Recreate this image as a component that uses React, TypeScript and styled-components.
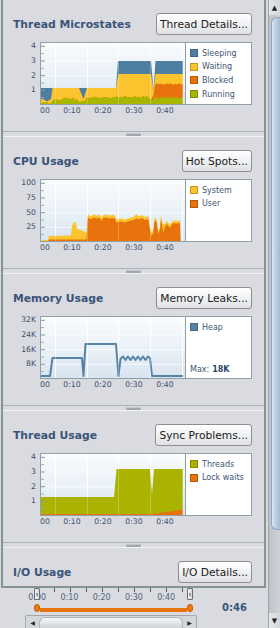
import React from "react";
import styled, { createGlobalStyle } from "styled-components";

const GlobalStyle = createGlobalStyle`
  html, body { margin: 0; padding: 0; }
  body {
    background: #d9dbe0;
    font-family: "DejaVu Sans", "Noto Sans", sans-serif;
    width: 280px;
    height: 628px;
    overflow: hidden;
  }
`;

const COL = {
  sleeping: "#4f7fa0",
  waiting: "#fbc32d",
  blocked: "#e8720c",
  running: "#a7b600",
  threads: "#a9b300",
  heap: "#5784a5",
  title: "#3b5478",
  text: "#3f5373",
};

type Pt = [number, number];
const PW = 144;
const PH = 61;

const areaPath = (pts: Pt[]) =>
  `M${pts[0][0]},${PH} ` +
  pts.map((p) => `L${p[0].toFixed(2)},${p[1].toFixed(2)}`).join(" ") +
  ` L${pts[pts.length - 1][0]},${PH} Z`;

const linePath = (pts: Pt[]) =>
  pts.map((p, i) => `${i ? "L" : "M"}${p[0].toFixed(2)},${p[1].toFixed(2)}`).join(" ");

const noise = (x: number, s: number) =>
  Math.sin(x * 1.7 + s) * 0.6 + Math.sin(x * 0.63 + s * 2) * 0.5;

/* ---------- data ---------- */

const msTotal: Pt[] = [
  [0, 45], [75, 45], [77, 18], [110, 18], [112.5, 47], [114.5, 18], [142, 18],
];
const msWaiting: Pt[] = [
  [0, 56], [2, 56], [6, 58.5], [10, 56], [11.5, 45], [38, 45], [42.5, 56], [46, 45],
  [75, 45], [77.5, 31], [110, 31], [112.5, 47], [114.5, 31], [142, 31],
];
const msRunning: Pt[] = [];
for (let x = 0; x <= 142; x += 2) {
  let b = 58;
  if (x < 12) b = 60;
  else if (x < 38) b = x > 20 && x < 34 ? 55.5 : 57;
  else if (x < 46) b = 58.5;
  else if (x < 75) b = 54.5;
  else if (x < 110) b = 54;
  else if (x < 114) b = 57;
  else b = 54.5;
  msRunning.push([x, b + noise(x, 1)]);
}
const msBlocked: Pt[] = [...msRunning.filter((p) => p[0] <= 110), [112.5, 52], [114, 41.5]];
for (let x = 116; x <= 142; x += 2) msBlocked.push([x, 41 + noise(x, 3) * 0.8]);

const cpuUser: Pt[] = [
  [0, 61], [7, 61], [8, 59.5], [45.5, 59.5], [46.7, 38], [50, 39], [53, 37.5], [56, 38.5],
  [59, 38], [60.5, 41], [62.3, 38], [65, 37.5], [68, 38.5], [71, 38], [74, 38.5], [75.5, 43],
  [77.3, 42], [80, 41.5], [84, 42.5], [88, 41], [92.3, 40], [95.7, 38.5], [98, 39.5],
  [101, 38], [104, 40], [107.3, 39], [109, 50], [110.5, 56], [112.3, 53], [113.5, 41],
  [115.7, 42], [117, 54], [119, 50], [120, 38], [121, 45], [122.3, 53], [124, 47],
  [125.7, 44], [127.5, 46], [129, 48], [131, 44], [133, 43], [136, 43.5], [139, 43], [139.5, 61],
];
const cpuSystem: Pt[] = [
  [0, 61], [1, 60], [7, 60], [8, 56], [30, 55.5], [31, 46], [33, 42], [35, 43], [36, 49],
  [40, 50], [44, 52], [45.5, 53],
  ...cpuUser
    .filter((p) => p[0] >= 46.7 && p[0] <= 139)
    .map((p): Pt => {
      let y = p[1] - 3;
      if (p[0] === 95.7) y = 34;
      if (p[0] === 122.3) y = 44;
      if (p[0] >= 131) y = p[1] - 2.5;
      return [p[0], y];
    }),
  [139.5, 61],
];

const memLine: Pt[] = [[0, 59], [9, 59], [11.5, 41], [41, 41], [42.5, 59], [44.5, 27], [75, 27], [77.5, 59], [79.5, 42]];
{
  let up = true;
  for (let x = 82; x <= 107; x += 2.5) {
    memLine.push([x, up ? 39.5 : 43]);
    up = !up;
  }
}
memLine.push([109, 41], [111, 59], [142, 59]);

const thThreads: Pt[] = [[0, 43], [73, 43], [75.5, 15], [109, 15], [111, 40], [113, 15], [142, 15]];
const thLocks: Pt[] = [[0, 60], [110, 60], [126, 58], [142, 55.5]];

/* ---------- layout ---------- */

const Page = styled.div`
  display: flex;
  width: 280px;
  height: 628px;
  overflow: hidden;
`;

const Main = styled.div`
  width: 268px;
  display: flex;
  flex-direction: column;
`;

const Panel = styled.div`
  flex: none;
  margin-left: 1px;
  width: 265px;
  height: 588px;
  box-sizing: border-box;
  border: 2px solid #84958f;
  border-top: none;
  overflow: hidden;
`;

const Section = styled.section`
  padding: 13px 12px 15px 10px;
`;

const Header = styled.div`
  display: flex;
  justify-content: space-between;
  align-items: center;
  height: 22px;
`;

const Title = styled.h2`
  margin: 0;
  font-size: 10.8px;
  font-weight: 700;
  color: ${COL.title};
`;

const ActionButton = styled.button`
  height: 22px;
  box-sizing: border-box;
  margin: 0;
  padding: 0 3px;
  border: 1px solid #8c8e92;
  border-radius: 3px;
  background: linear-gradient(#ffffff, #f2f3f4 45%, #dfe0e3);
  font-family: "DejaVu Sans", sans-serif;
  font-size: 10.7px;
  color: #1c1c1c;
  white-space: nowrap;
`;

const ChartRow = styled.div`
  display: flex;
  margin-top: 7px;
  height: 63px;
`;

const YAxis = styled.div`
  width: 27px;
  box-sizing: border-box;
  padding-right: 4px;
  text-align: right;
  font-size: 7.7px;
  line-height: 14.8px;
  color: #3d4f6e;
  & > div:first-child { margin-top: -3px; }
`;

const PlotBox = styled.div`
  width: 145px;
  height: 63px;
  box-sizing: border-box;
  border: 1px solid #8fa1a7;
  border-right: none;
  background: linear-gradient(#f9fbfd, #e9f0f7 55%, #d8e4f0);
  svg { display: block; }
`;

const LegendBox = styled.div`
  width: 67px;
  height: 63px;
  box-sizing: border-box;
  border: 1px solid #8fa1a7;
  background: #ffffff;
  padding: 3.5px 0 3px 4px;
  display: flex;
  flex-direction: column;
`;

const LegendItem = styled.div`
  display: flex;
  align-items: center;
  gap: 4px;
  height: 13.6px;
  font-size: 8px;
  color: ${COL.text};
  white-space: nowrap;
`;

const Swatch = styled.span<{ $c: string }>`
  width: 8px;
  height: 8px;
  flex: none;
  background: ${(p) => p.$c};
  box-shadow: inset 0 0 0 1px rgba(0, 0, 0, 0.22);
`;

const LegendFooter = styled.div`
  margin-top: auto;
  font-size: 8px;
  line-height: 10px;
  color: ${COL.text};
  b { color: #2f4466; margin-left: 3px; }
`;

const XAxis = styled.div`
  display: flex;
  margin-left: 27px;
  width: 145px;
  height: 11px;
  font-size: 7.7px;
  line-height: 11px;
  color: #3d4f6e;
`;

const XStart = styled.span`
  flex: none;
  width: 16.5px;
  text-align: left;
`;

const XTick = styled.span`
  flex: none;
  width: 31px;
  text-align: center;
`;

const Divider = styled.div`
  height: 6px;
  box-sizing: border-box;
  border-top: 1px solid #adb1b7;
  border-bottom: 1px solid #f3f4f6;
  display: flex;
  justify-content: center;
  align-items: center;
`;

const Grip = styled.span`
  width: 15px;
  height: 3px;
  border-radius: 1px;
  background: #a2a7ae;
  box-shadow: inset 0 1px 0 #c4c8cd;
`;

/* ---------- timeline ---------- */

const TimelineRow = styled.div`
  display: flex;
  height: 40px;
  padding-left: 25px;
`;

const Slider = styled.div`
  position: relative;
  width: 172px;
  display: flex;
  flex-direction: column;
  svg { display: block; }
`;

const RulerLabels = styled.div`
  display: flex;
  height: 9px;
  margin-left: -4px;
  & > span {
    flex: none;
    width: 32.25px;
    text-align: center;
    font-size: 8px;
    line-height: 9px;
    color: #56647a;
  }
`;

const RangeBar = styled.div`
  display: flex;
  align-items: flex-end;
  height: 8px;
  margin-top: 2px;
  padding-left: 9px;
`;

const Knob = styled.span`
  width: 6px;
  height: 8px;
  box-sizing: border-box;
  border-radius: 3px;
  background: #ee7a12;
  border: 1px solid #c75e05;
`;

const RangeLine = styled.span`
  width: 147px;
  height: 4px;
  background: #e8720c;
`;

const HScroll = styled.div`
  display: flex;
  margin-top: 3px;
  height: 13px;
  box-sizing: border-box;
  border: 1px solid #a3a8ae;
  border-bottom: none;
  border-radius: 2px 2px 0 0;
  background: #d3d6da;
`;

const HArrow = styled.span`
  width: 13px;
  display: flex;
  align-items: center;
  justify-content: center;
  font-size: 6px;
  color: #2a2a2a;
`;

const HThumb = styled.span`
  flex: 1;
  margin: 1px 0 0;
  border-radius: 6px 6px 0 0;
  border: 1px solid #b0b4ba;
  border-bottom: none;
  background: linear-gradient(#f6f7f8, #e4e6e9 50%, #cfd2d6);
`;

const Handle = styled.span<{ $left: number }>`
  position: absolute;
  top: 0;
  left: ${(p) => p.$left}px;
  width: 6px;
  height: 12px;
  box-sizing: border-box;
  border: 1px solid #6a6d72;
  border-radius: 1px;
  background: linear-gradient(90deg, #f5f5f5, #d6d6d6);
  &::after {
    content: "";
    position: absolute;
    left: 1px;
    right: 1px;
    top: 4px;
    height: 3px;
    background: #9a9da2;
  }
`;

const TimeLabel = styled.div`
  padding: 14px 0 0 25px;
  font-size: 10px;
  font-weight: 700;
  line-height: 12px;
  color: ${COL.title};
`;

/* ---------- vertical scrollbar ---------- */

const VScroll = styled.div`
  width: 12px;
  height: 628px;
  box-sizing: border-box;
  border-left: 1px solid #9ea4ab;
  display: flex;
  flex-direction: column;
  background: #c6cad0;
`;

const VArrow = styled.span`
  height: 15px;
  flex: none;
  display: flex;
  align-items: center;
  justify-content: center;
  font-size: 7px;
  color: #222;
  background: linear-gradient(90deg, #e6e8eb, #d3d6da);
`;

const VTrack = styled.div`
  flex: 1;
  padding-top: 2px;
  background: linear-gradient(90deg, #bfc3c9, #cfd2d7);
`;

const VThumb = styled.div`
  margin-left: 2px;
  height: 513px;
  box-sizing: border-box;
  border: 1px solid #8ea6bf;
  border-right: none;
  border-radius: 6px 0 0 6px;
  background: linear-gradient(90deg, #dfe9f3, #bcd0e3 45%, #a5bdd5);
`;

/* ---------- chart drawing ---------- */

const GRID_X = [14, 46, 77, 109, 141];
const GRID_Y = [3.3, 18, 32.7, 47.3];

function PlotSvg({ children }: { children: React.ReactNode }) {
  return (
    <svg width={PW} height={PH} viewBox={`0 0 ${PW} ${PH}`}>
      {GRID_X.map((x) => (
        <line key={"gx" + x} x1={x + 0.5} y1={0} x2={x + 0.5} y2={PH} stroke="#ffffff" strokeWidth={1} />
      ))}
      {GRID_Y.map((y) => (
        <line key={"gy" + y} x1={0} y1={y} x2={PW} y2={y} stroke="#ffffff" strokeOpacity={0.7} strokeWidth={1} />
      ))}
      {children}
      {GRID_X.map((x) => (
        <line key={"ox" + x} x1={x + 0.5} y1={0} x2={x + 0.5} y2={PH} stroke="#ffffff" strokeOpacity={0.25} strokeWidth={1} />
      ))}
      {GRID_Y.map((y) => (
        <line key={"tk" + y} x1={0} y1={y} x2={4} y2={y} stroke="#8796a3" strokeWidth={1} />
      ))}
      {GRID_Y.map((y) => (
        <line key={"tm" + y} x1={0} y1={y + 7.3} x2={3} y2={y + 7.3} stroke="#a3aeb8" strokeWidth={1} />
      ))}
    </svg>
  );
}

const X_LABELS = ["0:10", "0:20", "0:30", "0:40"];
const RULER_LABELS = ["0:00", "0:10", "0:20", "0:30", "0:40"];

type LegendEntry = { label: string; color: string };

function ChartSection({
  title,
  button,
  yLabels,
  legend,
  footer,
  children,
}: {
  title: string;
  button: string;
  yLabels: string[];
  legend: LegendEntry[];
  footer?: React.ReactNode;
  children: React.ReactNode;
}) {
  return (
    <Section>
      <Header>
        <Title>{title}</Title>
        <ActionButton>{button}</ActionButton>
      </Header>
      <ChartRow>
        <YAxis>
          {yLabels.map((l) => (
            <div key={l}>{l}</div>
          ))}
        </YAxis>
        <PlotBox>
          <PlotSvg>{children}</PlotSvg>
        </PlotBox>
        <LegendBox>
          {legend.map((e) => (
            <LegendItem key={e.label}>
              <Swatch $c={e.color} />
              {e.label}
            </LegendItem>
          ))}
          {footer && <LegendFooter>{footer}</LegendFooter>}
        </LegendBox>
      </ChartRow>
      <XAxis>
        <XStart>00</XStart>
        {X_LABELS.map((l) => (
          <XTick key={l}>{l}</XTick>
        ))}
      </XAxis>
    </Section>
  );
}

const RULER_TICKS = [13, 29, 45, 61, 77, 93, 109, 125, 141, 157];

export default function App() {
  return (
    <>
      <GlobalStyle />
      <Page>
        <Main>
          <Panel>
            <ChartSection
              title="Thread Microstates"
              button="Thread Details..."
              yLabels={["4", "3", "2", "1"]}
              legend={[
                { label: "Sleeping", color: COL.sleeping },
                { label: "Waiting", color: COL.waiting },
                { label: "Blocked", color: COL.blocked },
                { label: "Running", color: COL.running },
              ]}
            >
              <path d={areaPath(msTotal)} fill={COL.sleeping} />
              <path d={areaPath(msWaiting)} fill={COL.waiting} />
              <path d={areaPath(msBlocked)} fill={COL.blocked} />
              <path d={areaPath(msRunning)} fill={COL.running} />
            </ChartSection>
            <Divider>
              <Grip />
            </Divider>
            <ChartSection
              title="CPU Usage"
              button="Hot Spots..."
              yLabels={["100", "75", "50", "25"]}
              legend={[
                { label: "System", color: COL.waiting },
                { label: "User", color: COL.blocked },
              ]}
            >
              <path d={areaPath(cpuSystem)} fill={COL.waiting} />
              <path d={areaPath(cpuUser)} fill={COL.blocked} />
            </ChartSection>
            <Divider>
              <Grip />
            </Divider>
            <ChartSection
              title="Memory Usage"
              button="Memory Leaks..."
              yLabels={["32K", "24K", "16K", "8K"]}
              legend={[{ label: "Heap", color: COL.heap }]}
              footer={
                <>
                  Max:<b>18K</b>
                </>
              }
            >
              <path d={linePath(memLine)} fill="none" stroke={COL.heap} strokeWidth={2} strokeLinejoin="round" />
            </ChartSection>
            <Divider>
              <Grip />
            </Divider>
            <ChartSection
              title="Thread Usage"
              button="Sync Problems..."
              yLabels={["4", "3", "2", "1"]}
              legend={[
                { label: "Threads", color: COL.threads },
                { label: "Lock waits", color: COL.blocked },
              ]}
            >
              <path d={areaPath(thThreads)} fill={COL.threads} />
              <path d={areaPath(thLocks)} fill={COL.blocked} />
            </ChartSection>
            <Divider>
              <Grip />
            </Divider>
            <Section>
              <Header>
                <Title>I/O Usage</Title>
                <ActionButton>I/O Details...</ActionButton>
              </Header>
            </Section>
          </Panel>
          <TimelineRow>
            <Slider>
              <svg width={172} height={5}>
                {RULER_TICKS.map((x) => (
                  <line key={x} x1={x + 0.5} y1={0} x2={x + 0.5} y2={4} stroke="#56606e" strokeWidth={1} />
                ))}
              </svg>
              <RulerLabels>
                {RULER_LABELS.map((l) => (
                  <span key={l}>{l}</span>
                ))}
              </RulerLabels>
              <RangeBar>
                <Knob />
                <RangeLine />
                <Knob />
              </RangeBar>
              <HScroll>
                <HArrow>◀</HArrow>
                <HThumb />
                <HArrow>▶</HArrow>
              </HScroll>
              <Handle $left={9} />
              <Handle $left={162} />
            </Slider>
            <TimeLabel>0:46</TimeLabel>
          </TimelineRow>
        </Main>
        <VScroll>
          <VArrow>▲</VArrow>
          <VTrack>
            <VThumb />
          </VTrack>
          <VArrow>▼</VArrow>
        </VScroll>
      </Page>
    </>
  );
}
